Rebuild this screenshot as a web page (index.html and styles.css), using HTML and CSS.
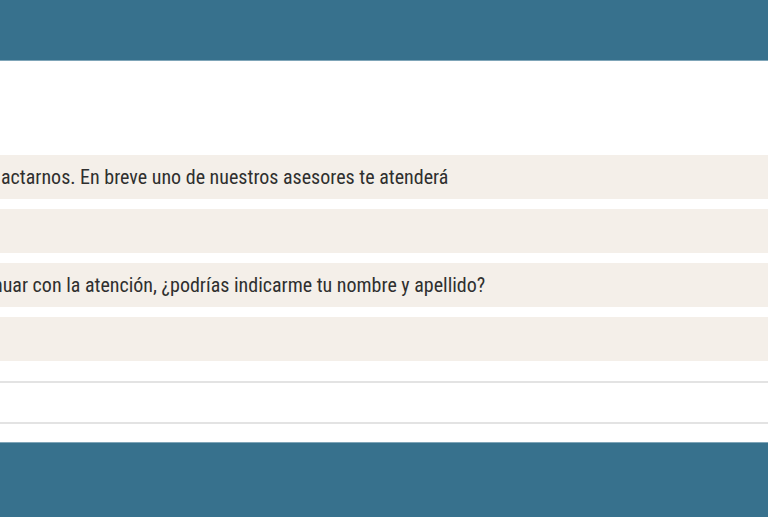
FILE: index.html
```html
<!DOCTYPE html>
<html lang="es">
<head>
<meta charset="utf-8">
<link rel="stylesheet" href="styles.css">
</head>
<body>
<header class="top"></header>
<main class="chat">
  <div class="msg"><span class="txt">actarnos. En breve uno de nuestros asesores te atenderá</span></div>
  <div class="msg"></div>
  <div class="msg"><span class="txt txt-clip">nuar con la atención, ¿podrías indicarme tu nombre y apellido?</span></div>
  <div class="msg"></div>
  <div class="input"></div>
</main>
<footer class="bottom"></footer>
</body>
</html>
```
FILE: styles.css
```css
html, body { margin: 0; padding: 0; }
body {
  width: 768px; height: 517px; overflow: hidden; background: #fff;
  font-family: Roboto, "Noto Sans", sans-serif;
}
.top {
  height: 60px; background: #37718d; border-bottom: 1px solid #7fa5b8;
}
.chat {
  padding-top: 94px; display: flex; flex-direction: column; gap: 10px;
  overflow: hidden;
}
.msg {
  height: 44px; background: #f4efe9; display: flex; align-items: center;
}
.txt {
  font-size: 20px; font-stretch: condensed; color: #2f2f2f; padding-left: 1px; white-space: nowrap;
}
.txt-clip { margin-left: -8px; }
.input {
  margin-top: 10px; height: 39px; border-top: 2px solid #e3e3e3; border-bottom: 2px solid #e3e3e3;
}
.bottom {
  margin-top: 18px; height: 74px; background: #37718d; border-top: 1px solid #7fa5b8;
}
```
